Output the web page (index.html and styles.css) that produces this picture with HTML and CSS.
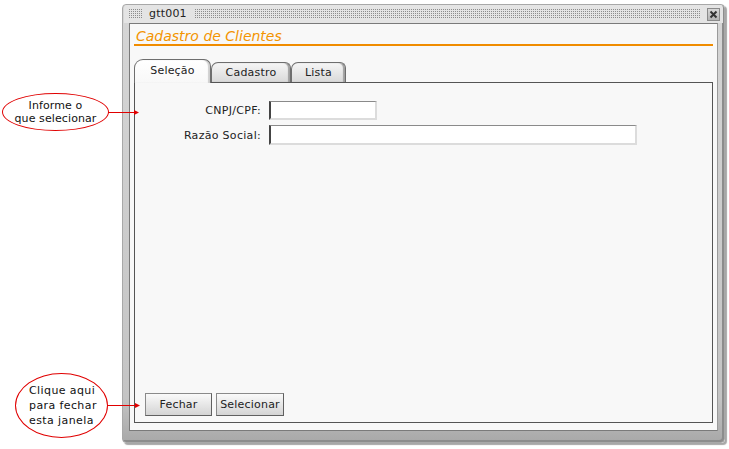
FILE: index.html
```html
<!DOCTYPE html>
<html lang="pt">
<head>
<meta charset="utf-8">
<title>gtt001</title>
<link rel="stylesheet" href="styles.css">
</head>
<body>
<div class="window">
  <div class="titlebar">
    <span class="dots dots-short"></span>
    <span class="wtitle">gtt001</span>
    <span class="dots dots-long"></span>
    <span class="close">
      <svg width="9" height="9" viewBox="0 0 9 9"><path d="M1.5 1.5 L7.5 7.5 M7.5 1.5 L1.5 7.5" stroke="#333" stroke-width="2"/></svg>
    </span>
  </div>
  <div class="content">
    <div class="header">Cadastro de Clientes</div>
    <div class="tabs">
      <div class="tab active">Seleção</div>
      <div class="tab">Cadastro</div>
      <div class="tab">Lista</div>
    </div>
    <div class="panel">
      <div class="form">
        <label class="lbl">CNPJ/CPF:</label>
        <div class="field"><span class="input input-short"></span></div>
        <label class="lbl">Razão Social:</label>
        <div class="field"><span class="input input-long"></span></div>
      </div>
      <div class="buttons">
        <button class="btn btn-fechar">Fechar</button>
        <button class="btn btn-sel">Selecionar</button>
      </div>
    </div>
  </div>
</div>

<div class="callout callout-1">
  <div class="bubble bubble-1">Informe o<br>que selecionar</div>
  <svg class="arrow" width="32" height="7" viewBox="0 0 32 7"><path d="M0 3.5 H28" stroke="#e00000" stroke-width="1"/><path d="M26 1 L31 3.5 L26 6 Z" fill="#e00000"/></svg>
</div>

<div class="callout callout-2">
  <div class="bubble bubble-2">Clique aqui<br>para fechar<br>esta janela</div>
  <svg class="arrow" width="34" height="7" viewBox="0 0 34 7"><path d="M0 3.5 H30" stroke="#e00000" stroke-width="1"/><path d="M28 1 L33 3.5 L28 6 Z" fill="#e00000"/></svg>
</div>
</body>
</html>
```
FILE: styles.css
```css
html, body {
  margin: 0;
  padding: 0;
  background: #ffffff;
  font-family: "DejaVu Sans", Verdana, sans-serif;
  font-size: 11px;
  color: #222;
}

body {
  position: relative;
  width: 729px;
  height: 449px;
  overflow: hidden;
}

.window {
  position: absolute;
  left: 122px;
  top: 4px;
  width: 603px;
  height: 439px;
  box-sizing: border-box;
  border: 1px solid #a8a8a8;
  border-radius: 4px;
  background: linear-gradient(to bottom, #d6d6d6 0%, #c4c4c4 90%, #a8a8a8 100%);
  box-shadow: 2px 2px 1px rgba(0, 0, 0, 0.35), inset -2px -2px 0 #8c8c8c;
  padding: 0 6px 11px 6px;
  display: flex;
  flex-direction: column;
}

.titlebar {
  height: 18px;
  margin: 0 -5px 0 -5px;
  padding: 0 3px 0 4px;
  background: #e4e4e4;
  border-radius: 3px 3px 0 0;
  display: flex;
  align-items: center;
  gap: 6px;
}

.dots {
  height: 10px;
  background-image: conic-gradient(#8c8c8c 25%, transparent 0);
  background-size: 2px 2px;
}

.dots-short { width: 14px; }
.dots-long { flex: 1; }

.wtitle {
  color: #222;
  font-size: 11px;
  line-height: 18px;
  padding: 0 1px;
  letter-spacing: 0.2px;
}

.close {
  width: 13px;
  height: 13px;
  box-sizing: border-box;
  border: 1px solid #8a8a8a;
  background: linear-gradient(#d8d8d8, #b4b4b4);
  display: flex;
  align-items: center;
  justify-content: center;
}

.content {
  flex: 1;
  background: #f8f8f8;
  border: 1px solid #7a7a7a;
  border-right-color: #9a9a9a;
  padding: 4px 4px 7px 4px;
  display: flex;
  flex-direction: column;
}

.header {
  color: #f39400;
  font-style: italic;
  font-size: 14px;
  line-height: 16px;
  padding-left: 2px;
  border-bottom: 2px solid #f08c00;
  letter-spacing: 0;
}

.tabs {
  margin-top: 13px;
  height: 23px;
  display: flex;
  align-items: flex-end;
  position: relative;
  z-index: 1;
  letter-spacing: 0.2px;
}

.tab {
  box-sizing: border-box;
  height: 20px;
  border: 1px solid #6e6e6e;
  border-bottom: none;
  border-radius: 7px 6px 0 0;
  background: linear-gradient(#f6f6f6, #d9d9d9);
  box-shadow: inset -2px 0 1px #a0a0a0;
  text-align: center;
  line-height: 20px;
  color: #222;
}

.tab:nth-child(2) { width: 80px; }
.tab:nth-child(3) { width: 55px; }

.tab.active {
  width: 77px;
  height: 24px;
  margin-bottom: -1px;
  line-height: 22px;
  background: linear-gradient(#ffffff, #f8f8f8);
  border-radius: 9px 7px 0 0;
  box-shadow: inset -2px 0 1px #cfcfcf;
  position: relative;
  z-index: 2;
}

.panel {
  flex: 1;
  border: 1px solid #555555;
  background: #f8f8f8;
  display: flex;
  flex-direction: column;
  padding: 18px 0 6px 0;
}

.form {
  display: grid;
  grid-template-columns: 126px auto;
  column-gap: 8px;
  row-gap: 5px;
  align-items: center;
}

.lbl {
  text-align: right;
  color: #222;
  letter-spacing: 0.3px;
}

.field { display: flex; }

.input {
  display: block;
  box-sizing: border-box;
  background: #ffffff;
  border: 2px solid #dcdcdc;
  border-top: 1px solid #8a8a8a;
  border-left: 2px solid #444;
}

.input-short { width: 108px; height: 19px; }
.input-long { width: 368px; height: 20px; }

.buttons {
  margin-top: auto;
  display: flex;
  gap: 4px;
  padding-left: 10px;
}

.btn {
  height: 23px;
  box-sizing: border-box;
  font-family: inherit;
  font-size: 11px;
  letter-spacing: 0.2px;
  color: #222;
  border: 1px solid #8a8a8a;
  border-right-color: #606060;
  border-bottom-color: #606060;
  background: linear-gradient(#fafafa, #d4d4d4);
  padding: 0;
  margin: 0;
}

.btn-fechar { width: 67px; }
.btn-sel { width: 68px; }

.callout {
  position: absolute;
  display: flex;
  align-items: center;
}

.callout-1 { left: 2px; top: 93px; }
.callout-2 { left: 15px; top: 373px; }

.bubble {
  box-sizing: border-box;
  border: 1px solid #e00000;
  border-radius: 50%;
  background: #fff;
  color: #111;
  font-size: 11px;
  display: flex;
  align-items: center;
}

.bubble-1 {
  width: 107px;
  height: 38px;
  justify-content: center;
  text-align: center;
  line-height: 13px;
  letter-spacing: 0.1px;
}

.bubble-2 {
  width: 93px;
  height: 65px;
  padding-left: 13px;
  line-height: 15px;
  letter-spacing: 0.4px;
}

.arrow { display: block; margin-left: -1px; }
```
